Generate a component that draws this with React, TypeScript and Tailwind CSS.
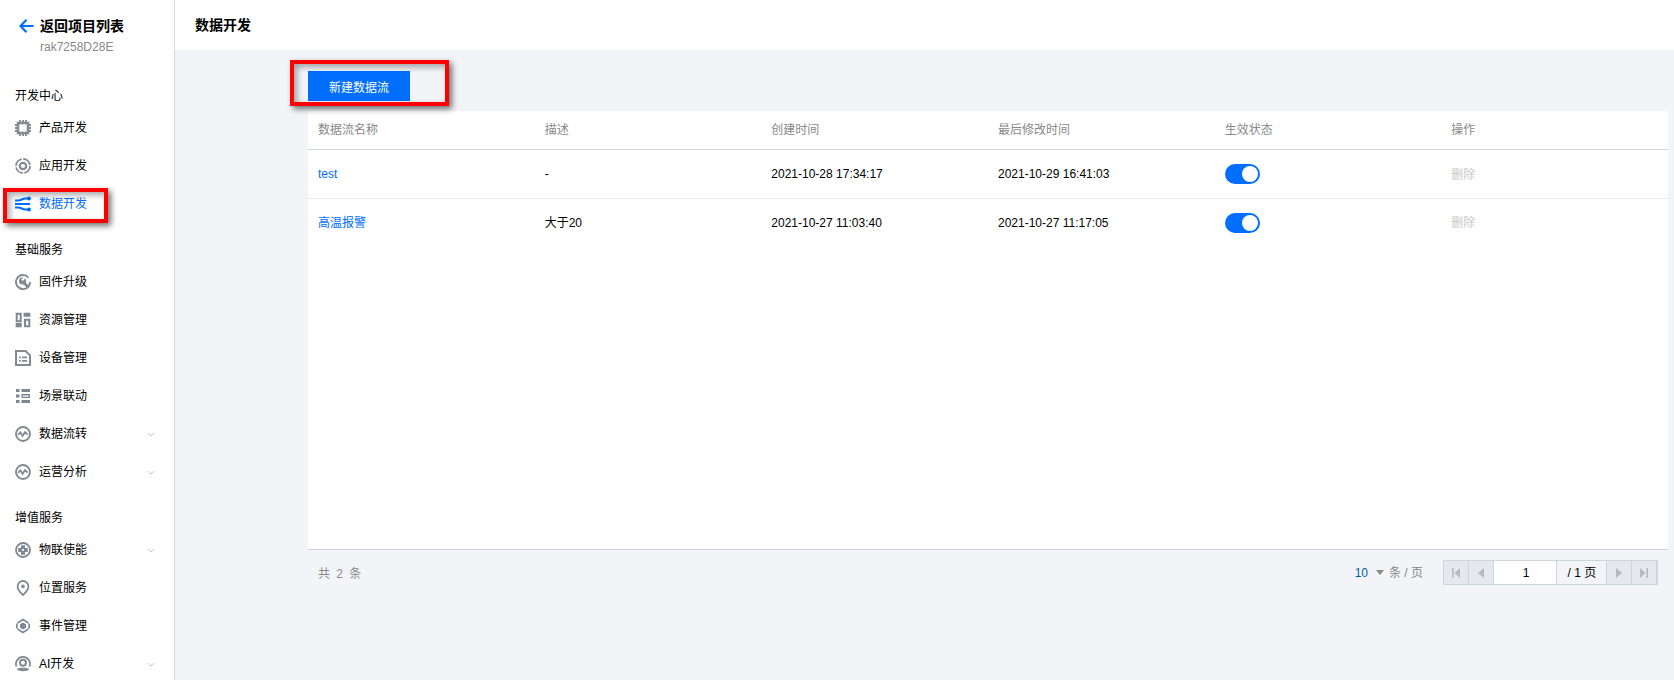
import type { ReactNode } from "react";

const font = { fontFamily: '"Liberation Sans", "Noto Sans CJK SC", sans-serif' };

const Svg = ({ children }: { children: ReactNode }) => (
  <svg width="16" height="16" viewBox="0 0 16 16" fill="none" className="shrink-0">
    {children}
  </svg>
);

const GRAY = "#868a90";
const SLATE = "#7e8893";

const icons: Record<string, ReactNode> = {
  chip: (
    <Svg>
      <rect x="3" y="3" width="10" height="10" stroke={GRAY} strokeWidth="2.6" />
      <path d="M5 0v2.5M8 0v2.5M11 0v2.5M5 13.5V16M8 13.5V16M11 13.5V16M0 5h2.5M0 8h2.5M0 11h2.5M13.5 5H16M13.5 8H16M13.5 11H16" stroke={GRAY} strokeWidth="1.8" />
    </Svg>
  ),
  ring: (
    <Svg>
      <circle cx="8" cy="8" r="7" stroke={GRAY} strokeWidth="1.8" strokeDasharray="9.5 1.5" />
      <circle cx="8" cy="8" r="3.2" stroke={GRAY} strokeWidth="2.2" />
    </Svg>
  ),
  flow: (
    <Svg>
      <path d="M0 4.5h3C6.5 4.5 7 2.5 10.5 2.5H13M0 8h15M0 11.5h3c3.5 0 4 2 7.5 2H13" stroke="#006eff" strokeWidth="2" />
      <circle cx="14" cy="2.5" r="2" fill="#006eff" />
      <circle cx="14" cy="13.5" r="2" fill="#006eff" />
    </Svg>
  ),
  wrench: (
    <Svg>
      <path d="M13.4 3.6A7 7 0 1 0 15 8" stroke={GRAY} strokeWidth="1.9" />
      <circle cx="7.5" cy="7" r="3.6" fill={GRAY} />
      <path d="M8.6 8.6l5 5" stroke={GRAY} strokeWidth="2.8" />
      <path d="M7 6.2l3.4-3.4" stroke="#fff" strokeWidth="2.2" />
    </Svg>
  ),
  blocks: (
    <Svg>
      <path d="M1.7 1.7h4v7.6h-4zM10 7.7h4.3v6.6H10z" stroke={SLATE} strokeWidth="2" />
      <path d="M8.6.7H15.3v4H8.6zM.7 11H6.7v4.3H.7z" fill={SLATE} />
    </Svg>
  ),
  sheet: (
    <Svg>
      <path d="M1 1h9.6L15 5.4V15H1z" stroke={GRAY} strokeWidth="2" />
      <path d="M4 6.5h1.8v1.8H4zM4 10h1.8v1.8H4zM7 6.5h5v1.8H7zM7 10h5v1.8H7z" fill={GRAY} />
    </Svg>
  ),
  tree: (
    <Svg>
      <path d="M1 1h3.5v3H1zM1 12h3.5v3H1zM6.5 1H15v3H6.5zM6.5 12H15v3H6.5zM1 6.5h3.5v3H1z" fill={SLATE} />
      <path d="M7.2 6.8h7.1v2.6H7.2z" stroke={SLATE} strokeWidth="1.4" />
    </Svg>
  ),
  pulse: (
    <Svg>
      <circle cx="8" cy="8" r="7" stroke={GRAY} strokeWidth="1.9" />
      <path d="M3 8.8l2.4-2.4 2.2 3.4 2.4-3.6 2.8 2.4" stroke={GRAY} strokeWidth="1.8" />
    </Svg>
  ),
  plus: (
    <Svg>
      <circle cx="8" cy="8" r="7" stroke={SLATE} strokeWidth="1.8" />
      <path d="M6 3.2h4v2.8h2.8v4H10v2.8H6V10H3.2V6H6z" fill={SLATE} />
      <circle cx="8" cy="8" r="1.1" fill="#fff" />
    </Svg>
  ),
  pin: (
    <Svg>
      <path d="M8 15C5 12.2 2.6 9.6 2.6 6.4a5.4 5.4 0 0 1 10.8 0c0 3.2-2.4 5.8-5.4 8.6z" stroke={GRAY} strokeWidth="1.8" />
      <circle cx="8" cy="6.4" r="1.8" fill={GRAY} />
    </Svg>
  ),
  hex: (
    <Svg>
      <path d="M2.6 5L8 1.6 13.4 5M2.6 11L8 14.4 13.4 11M1.8 5.6v4.8M14.2 5.6v4.8" stroke={SLATE} strokeWidth="1.7" />
      <path d="M8 4.6l3 1.7v3.4l-3 1.7-3-1.7V6.3z" fill={SLATE} />
    </Svg>
  ),
  face: (
    <Svg>
      <path d="M1.5 10.5A7 7 0 1 1 14.5 10.5" stroke={GRAY} strokeWidth="1.8" />
      <circle cx="8" cy="6.8" r="3" stroke={GRAY} strokeWidth="2" />
      <path d="M1.5 13c3.2-1.6 9.8-1.6 13 0-2 3-11 3-13 0z" fill={GRAY} />
    </Svg>
  ),
};

type NavItem = { label: string; icon: string; caret?: boolean; active?: boolean };

const groups: { title: string; items: NavItem[] }[] = [
  {
    title: "开发中心",
    items: [
      { label: "产品开发", icon: "chip" },
      { label: "应用开发", icon: "ring" },
      { label: "数据开发", icon: "flow", active: true },
    ],
  },
  {
    title: "基础服务",
    items: [
      { label: "固件升级", icon: "wrench" },
      { label: "资源管理", icon: "blocks" },
      { label: "设备管理", icon: "sheet" },
      { label: "场景联动", icon: "tree" },
      { label: "数据流转", icon: "pulse", caret: true },
      { label: "运营分析", icon: "pulse", caret: true },
    ],
  },
  {
    title: "增值服务",
    items: [
      { label: "物联使能", icon: "plus", caret: true },
      { label: "位置服务", icon: "pin" },
      { label: "事件管理", icon: "hex" },
      { label: "AI开发", icon: "face", caret: true },
    ],
  },
];

const rows = [
  { name: "test", desc: "-", created: "2021-10-28 17:34:17", updated: "2021-10-29 16:41:03" },
  { name: "高温报警", desc: "大于20", created: "2021-10-27 11:03:40", updated: "2021-10-27 11:17:05" },
];

const heads = ["数据流名称", "描述", "创建时间", "最后修改时间", "生效状态", "操作"];

const RedFrame = ({ className }: { className: string }) => (
  <div
    className={`pointer-events-none absolute border-4 border-[#ff0000] shadow-[3px_3px_6px_rgba(0,0,0,0.55),inset_3px_3px_6px_rgba(0,0,0,0.35)] ${className}`}
  />
);

const Toggle = () => (
  <span className="flex h-5 w-[35px] items-center justify-end rounded-full bg-[#006eff] pr-[2px]">
    <span className="h-4 w-4 rounded-full bg-white" />
  </span>
);

const PagerButton = ({ d }: { d: string }) => (
  <span className="flex h-full w-[25px] items-center justify-center border-r border-[#cfd5de] bg-[#e5e8ed]">
    <svg width="8" height="10" viewBox="0 0 8 10">
      <path d={d} fill="#b4b9c2" />
    </svg>
  </span>
);

export default function App() {
  return (
    <div style={font} className="relative flex h-[680px] w-[1674px] overflow-hidden bg-[#f2f4f8] text-xs text-black">
      <aside className="h-full w-[175px] shrink-0 overflow-hidden border-r border-[#d5dae6] bg-white">
        <div className="h-[83px] pl-[19px] pt-[18px]">
          <div className="flex h-4 items-center">
            <svg width="15" height="14" viewBox="0 0 15 14" fill="none" className="shrink-0">
              <path d="M14.5 7H1.5M7.5.8L1.5 7l6 6.2" stroke="#006eff" strokeWidth="2.2" />
            </svg>
            <span className="ml-[6px] text-sm font-bold leading-4">返回项目列表</span>
          </div>
          <div className="ml-[21px] mt-[6px] leading-[14px] text-[#888]">rak7258D28E</div>
        </div>
        {groups.map((g, i) => (
          <div key={g.title} className={i > 0 ? "mt-[14px]" : ""}>
            <div className="flex h-[26px] items-center pl-[15px]">{g.title}</div>
            {g.items.map((it) => (
              <div key={it.label} className="flex h-[38px] items-center pl-[15px]">
                {icons[it.icon]}
                <span className={`ml-2 ${it.active ? "text-[#006eff]" : ""}`}>{it.label}</span>
                {it.caret && (
                  <svg width="8" height="5" viewBox="0 0 8 5" fill="none" className="ml-auto mr-[19px]">
                    <path d="M.8.8L4 4l3.2-3.2" stroke="#c4c8cf" strokeWidth="1" />
                  </svg>
                )}
              </div>
            ))}
          </div>
        ))}
      </aside>

      <div className="flex min-w-0 flex-1 flex-col">
        <header className="flex h-[50px] items-center bg-white pl-5 text-sm font-bold">数据开发</header>
        <main className="flex flex-1 flex-col pl-[133px] pr-[6px] pt-[21px]">
          <button className="h-[30px] w-[102px] bg-[#006eff] pt-[4px] text-xs text-white">新建数据流</button>
          <section className="mt-[10px] flex h-[439px] flex-col border-b border-[#cfd5de] bg-white">
            <div className="grid h-[39px] shrink-0 grid-cols-6 items-center border-b border-[#d3d6e0] text-[#888]">
              {heads.map((h) => (
                <div key={h} className="pl-[10px]">{h}</div>
              ))}
            </div>
            {rows.map((r, i) => (
              <div
                key={r.name}
                className={`grid shrink-0 grid-cols-6 items-center ${i === 0 ? "h-[49px] border-b border-[#e7eaf1]" : "h-[48px]"}`}
              >
                <div className="pl-[10px] text-[#006eff]">{r.name}</div>
                <div className="pl-[10px]">{r.desc}</div>
                <div className="pl-[10px]">{r.created}</div>
                <div className="pl-[10px]">{r.updated}</div>
                <div className="pl-[10px]"><Toggle /></div>
                <div className={`pl-[10px] text-[#c8c8c8] ${i === 0 ? "pt-[1px]" : ""}`}>删除</div>
              </div>
            ))}
          </section>
          <footer className="flex items-center pl-[10px] pt-[10px] pr-[10px]">
            <span className="pt-[2px] text-[#888] [word-spacing:3px]">共 2 条</span>
            <span className="ml-auto flex items-center">
              <span className="text-[#00639c]">10</span>
              <svg width="8" height="5" viewBox="0 0 8 5" className="ml-[8px]">
                <path d="M0 0h8L4 5z" fill="#888" />
              </svg>
              <span className="ml-[5px] pt-[1px] text-[#888]">条 / 页</span>
            </span>
            <span className="ml-5 flex h-[25px] w-[215px] items-center border border-[#cfd5de]">
              <PagerButton d="M0 0h1.6v10H0zM8 0v10L2.5 5z" />
              <PagerButton d="M7 0v10L1 5z" />
              <span className="flex h-full w-[64px] items-center justify-center border-r border-[#cfd5de] bg-white pl-[2px]">1</span>
              <span className="flex h-full w-[50px] items-center justify-center border-r border-[#cfd5de]">/ 1 页</span>
              <PagerButton d="M1 0v10l6-5z" />
              <PagerButton d="M0 0v10l5.5-5zM6.4 0H8v10H6.4z" />
            </span>
          </footer>
        </main>
      </div>

      <RedFrame className="left-[3px] top-[188px] h-[35px] w-[105px]" />
      <RedFrame className="left-[290px] top-[60px] h-[46px] w-[159px]" />
    </div>
  );
}
